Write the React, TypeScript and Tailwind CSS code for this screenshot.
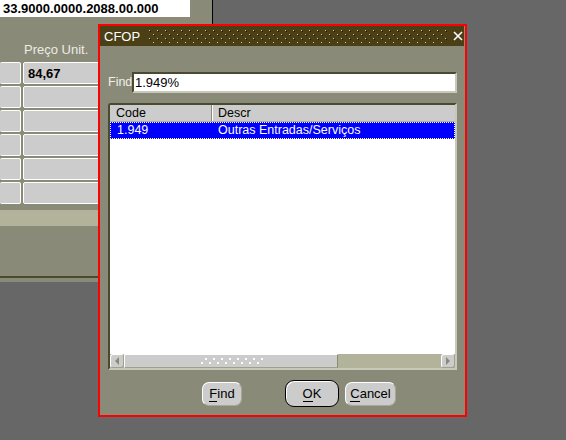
import React from 'react';

function Dots({ w, h }: { w: number; h: number }) {
  return (
    <svg width={w} height={h} className="block">
      <defs>
        <pattern id="tdots" width="8" height="8" patternUnits="userSpaceOnUse">
          <rect x="1" y="1" width="1" height="1" fill="#d8c890" />
          <rect x="2" y="2" width="1" height="1" fill="#1a1406" />
          <rect x="5" y="5" width="1" height="1" fill="#d8c890" />
          <rect x="6" y="6" width="1" height="1" fill="#1a1406" />
        </pattern>
      </defs>
      <rect width={w} height={h} fill="url(#tdots)" />
    </svg>
  );
}

function GripDots() {
  return (
    <svg width="68" height="8" className="block">
      {Array.from({ length: 8 }).map((_, i) => (
        <g key={i}>
          <rect x={4 + i * 8} y={1} width="2" height="2" fill="#ffffff" />
          <rect x={0 + i * 8} y={5} width="2" height="2" fill="#ffffff" />
        </g>
      ))}
    </svg>
  );
}

function Arrow({ dir }: { dir: 'l' | 'r' }) {
  return (
    <svg width="6" height="8" className="block">
      {dir === 'l' ? <path d="M5 0 L1 4 L5 8 Z" fill="#8a8a78" /> : <path d="M1 0 L5 4 L1 8 Z" fill="#8a8a78" />}
    </svg>
  );
}

export default function App() {
  const rows = ['84,67', '', '', '', '', ''];
  return (
    <div className="relative w-[566px] h-[440px] bg-[#676767] overflow-hidden font-['Liberation_Sans',Arial,sans-serif] text-[12.5px] leading-none">
      {/* background window */}
      <div className="absolute left-0 top-0 w-[213px] h-[282px] bg-[#8a8a78] border-r border-black">
        <div className="flex h-[17px] w-[190px] items-center bg-white pl-[3px] text-[13px] font-bold text-black">
          33.9000.0000.2088.00.000
        </div>
        <div className="mt-[26px] flex">
          <span className="ml-[24px] text-[#ecece4] text-[13px]">Preço Unit.</span>
        </div>
        <div className="mt-[6px] flex flex-col gap-[2px]">
          {rows.map((r, i) => (
            <div key={i} className="flex gap-[2px]">
              <div className="h-[22px] w-[21px] rounded-[2px] border border-l-0 border-white bg-[#cccccc]" />
              <div className="flex h-[22px] w-[120px] items-center rounded-[2px] border border-white bg-[#cccccc] pl-[4px] text-[13px] font-bold text-black">
                {r}
              </div>
            </div>
          ))}
        </div>
        <div className="mt-[6px] h-[16px] bg-[#b3b39b]" />
        <div className="mt-[50px] h-[2px] bg-[#4a4a30]" />
      </div>

      {/* dialog */}
      <div className="absolute left-[98px] top-[24px] flex h-[393px] w-[369px] flex-col border-2 border-[#ff0000] bg-[#8a8a78]">
        <div className="mr-[1px] flex h-[20px] items-center bg-[#4b3f16]">
          <span className="pl-[4px] text-[13px] text-white">CFOP</span>
          <div className="ml-[8px]">
            <Dots w={300} h={14} />
          </div>
          <svg width="12" height="12" className="ml-[4px] block">
            <path d="M2 2 L10 10 M10 2 L2 10" stroke="#ffffff" strokeWidth="1.6" />
          </svg>
        </div>

        <div className="mt-[26px] flex items-center pl-[8px]">
          <span className="w-[24px] text-[12.5px] text-[#f0f0e8]">Find</span>
          <div className="flex h-[21px] w-[325px] items-center border-2 border-t-[#4a4a30] border-l-[#4a4a30] border-b-[#c8c8b8] border-r-[#c8c8b8] bg-white pl-[1px] text-[13px] text-black">
            1.949%
          </div>
        </div>

        <div className="ml-[8px] mt-[10px] flex h-[267px] w-[349px] flex-col rounded-tl-[3px] border-2 border-t-[#4a4a30] border-l-[#4a4a30] border-b-[#c8c8b8] border-r-[#c8c8b8] bg-white">
          <div className="flex h-[17px] border-b border-[#b0b098] bg-[#cccccc] text-black">
            <div className="flex w-[102px] items-center border-r border-r-[#8a8a78] pl-[6px]">Code</div>
            <div className="flex flex-1 items-center border-l border-l-white pl-[5px]">Descr</div>
          </div>
          <div className="flex h-[17px] bg-[#0000ff] text-white outline-1 outline-dotted outline-offset-[-1px] outline-white">
            <div className="flex w-[102px] items-center pl-[7px]">1.949</div>
            <div className="flex flex-1 items-center pl-[6px]">Outras Entradas/Serviços</div>
          </div>
          <div className="flex-1" />
          <div className="flex h-[14px] bg-[#b3b39b]">
            <div className="flex w-[14px] items-center justify-center rounded-[3px] border border-t-white border-l-white border-b-[#a0a090] border-r-[#a0a090] bg-[#cccccc]">
              <Arrow dir="l" />
            </div>
            <div className="flex w-[214px] items-center justify-center border border-t-white border-l-white border-b-[#a0a090] border-r-[#8a8a78] bg-[#cccccc] pl-[8px]">
              <GripDots />
            </div>
            <div className="flex-1" />
            <div className="flex w-[14px] items-center justify-center rounded-[3px] border border-t-white border-l-white border-b-[#a0a090] border-r-[#a0a090] bg-[#cccccc]">
              <Arrow dir="r" />
            </div>
          </div>
        </div>

        <div className="mt-[10px] flex items-center pl-[102px] text-[13px] text-black">
          <div className="flex h-[24px] w-[40px] items-center justify-center rounded-[7px] border border-t-white border-l-white border-b-[#a8a898] border-r-[#a8a898] bg-[#cccccc]">
            <span><span className="border-b border-black">F</span>ind</span>
          </div>
          <div className="ml-[43px] flex h-[27px] w-[54px] items-center justify-center rounded-[9px] border border-black bg-[#cccccc] shadow-[inset_1px_1px_0_#ffffff]">
            <span><span className="border-b border-black">O</span>K</span>
          </div>
          <div className="ml-[6px] flex h-[24px] w-[51px] items-center justify-center rounded-[7px] border border-t-white border-l-white border-b-[#a8a898] border-r-[#a8a898] bg-[#cccccc]">
            <span><span className="border-b border-black">C</span>ancel</span>
          </div>
        </div>
      </div>
    </div>
  );
}
